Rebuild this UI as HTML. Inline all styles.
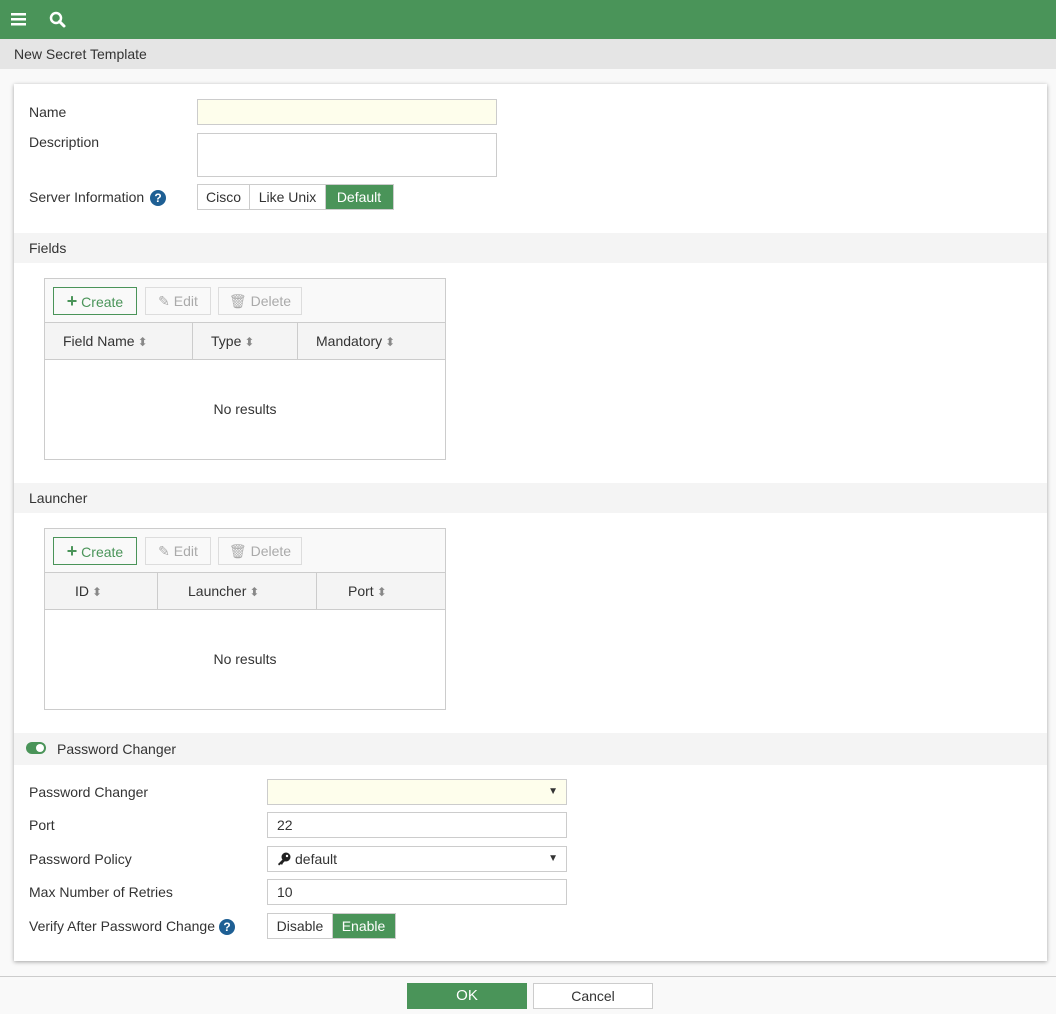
<!DOCTYPE html>
<html><head><meta charset="utf-8"><style>
*{box-sizing:border-box;margin:0;padding:0}
body{width:1056px;height:1014px;background:#f9f9f9;font-family:"Liberation Sans",sans-serif;font-size:14px;color:#333;position:relative;overflow:hidden}
.a{position:absolute}
.top{left:0;top:0;width:1056px;height:39px;background:#4a9459}
.title{left:0;top:39px;width:1056px;height:30px;background:#e5e5e5;padding:7px 14px;font-size:14px}
.card{left:14px;top:84px;width:1033px;height:877px;background:#fff;box-shadow:0 1px 4px rgba(0,0,0,.35)}
.lbl{font-size:14px;color:#333}
.inp{border:1px solid #ccc;background:#fff;height:26px;padding:4px 9px;font-size:14px}
.band{left:0;width:1033px;height:30px;background:#f4f4f4;padding:7px 15px}
.seg{display:flex;border:1px solid #ccc;height:26px}
.seg span{border-right:1px solid #ccc;line-height:24px;text-align:center}
.seg span.on{background:#4a9459;color:#fff;border-color:#4a9459}
.tbl{border:1px solid #ccc;width:402px;height:182px;background:#fff}
.tb{height:44px;background:#f9f9f9;border-bottom:1px solid #ccc;position:relative}
.btn{position:absolute;top:8px;height:28px;border:1px solid #ddd;color:#aaa;font-size:14px;line-height:26px;text-align:center}
.hd{height:37px;background:#f4f4f4;border-bottom:1px solid #ccc;position:relative}
.hd div{position:absolute;top:0;height:36px;line-height:36px;border-right:1px solid #ccc}
.srt{color:#888;font-size:12px;margin-left:3px}
.nr{text-align:center;padding-top:41px}
.q{display:inline-block;width:16px;height:16px;border-radius:50%;background:#1e5f94;color:#fff;font-weight:bold;font-size:12px;text-align:center;line-height:16px;vertical-align:middle;margin-left:4px}
.arr{position:absolute;right:8px;top:0;font-size:10px;line-height:24px}
</style></head><body>
<div class="a top">
<svg class="a" style="left:11px;top:12px" width="16" height="14"><rect y="1" width="15" height="2.5" fill="#fff"/><rect y="6" width="15" height="2.5" fill="#fff"/><rect y="11" width="15" height="2.5" fill="#fff"/></svg>
<svg class="a" style="left:49px;top:11px" width="18" height="18"><circle cx="7" cy="7" r="5" stroke="#fff" stroke-width="2.5" fill="none"/><line x1="10.5" y1="10.5" x2="15" y2="15" stroke="#fff" stroke-width="3" stroke-linecap="round"/></svg>
</div>
<div class="a title">New Secret Template</div>
<div class="a card">
<div class="a lbl" style="left:15px;top:20px">Name</div>
<div class="a inp" style="left:183px;top:15px;width:300px;background:#fefeec"></div>
<div class="a lbl" style="left:15px;top:50px">Description</div>
<div class="a inp" style="left:183px;top:49px;width:300px;height:44px"></div>
<div class="a lbl" style="left:15px;top:105px">Server Information <span class="q" style="margin-left:2px">?</span></div>
<div class="a seg" style="left:183px;top:100px"><span style="width:52px">Cisco</span><span style="width:76px">Like Unix</span><span class="on" style="width:67px">Default</span></div>

<div class="a band" style="top:149px">Fields</div>
<div class="a tbl" style="left:30px;top:194px">
<div class="tb">
<div class="btn" style="left:8px;width:84px;border-color:#4a9459;color:#4a9459"><b style="font-size:18px">+</b> Create</div>
<div class="btn" style="left:100px;width:66px">✎ Edit</div>
<div class="btn" style="left:173px;width:84px">🗑 Delete</div>
</div>
<div class="hd"><div style="left:0;width:148px;padding-left:18px">Field Name<span class="srt">⬍</span></div><div style="left:148px;width:105px;padding-left:18px">Type<span class="srt">⬍</span></div><div style="left:253px;width:148px;border:0;padding-left:18px">Mandatory<span class="srt">⬍</span></div></div>
<div class="nr">No results</div>
</div>

<div class="a band" style="top:399px">Launcher</div>
<div class="a tbl" style="left:30px;top:444px">
<div class="tb">
<div class="btn" style="left:8px;width:84px;border-color:#4a9459;color:#4a9459"><b style="font-size:18px">+</b> Create</div>
<div class="btn" style="left:100px;width:66px">✎ Edit</div>
<div class="btn" style="left:173px;width:84px">🗑 Delete</div>
</div>
<div class="hd"><div style="left:0;width:113px;padding-left:30px">ID<span class="srt">⬍</span></div><div style="left:113px;width:159px;padding-left:30px">Launcher<span class="srt">⬍</span></div><div style="left:272px;width:129px;border:0;padding-left:31px">Port<span class="srt">⬍</span></div></div>
<div class="nr">No results</div>
</div>

<div class="a band" style="top:649px;height:32px;padding-left:43px;padding-top:8px">Password Changer</div>
<div class="a" style="left:12px;top:658px;width:20px;height:12px;border-radius:6px;background:#4a9459"><div style="position:absolute;right:2px;top:2px;width:8px;height:8px;border-radius:50%;background:#fff"></div></div>

<div class="a lbl" style="left:15px;top:700px">Password Changer</div>
<div class="a inp" style="left:253px;top:695px;width:300px;background:#fefeec"><span class="arr">▼</span></div>
<div class="a lbl" style="left:15px;top:733px">Port</div>
<div class="a inp" style="left:253px;top:728px;width:300px">22</div>
<div class="a lbl" style="left:15px;top:767px">Password Policy</div>
<div class="a inp" style="left:253px;top:762px;width:300px"><svg width="14" height="14" style="vertical-align:-2px;margin-right:4px" viewBox="0 0 14 14"><circle cx="9" cy="5" r="4.5" fill="#222"/><path d="M6 7L1 12L2 13.5L4 12L5 13L6 11L8 9Z" fill="#222"/><circle cx="10" cy="4" r="1.2" fill="#fff"/></svg>default<span class="arr">▼</span></div>
<div class="a lbl" style="left:15px;top:800px">Max Number of Retries</div>
<div class="a inp" style="left:253px;top:795px;width:300px">10</div>
<div class="a lbl" style="left:15px;top:834px">Verify After Password Change<span class="q">?</span></div>
<div class="a seg" style="left:253px;top:829px"><span style="width:65px">Disable</span><span class="on" style="width:62px">Enable</span></div>
</div>
<div class="a" style="left:0;top:976px;width:1056px;height:1px;background:#ccc"></div>
<div class="a" style="left:407px;top:983px;width:120px;height:26px;background:#4a9459;color:#fff;text-align:center;line-height:26px;font-size:15px">OK</div>
<div class="a" style="left:533px;top:983px;width:120px;height:26px;background:#fff;border:1px solid #ccc;text-align:center;line-height:24px">Cancel</div>
</body></html>
